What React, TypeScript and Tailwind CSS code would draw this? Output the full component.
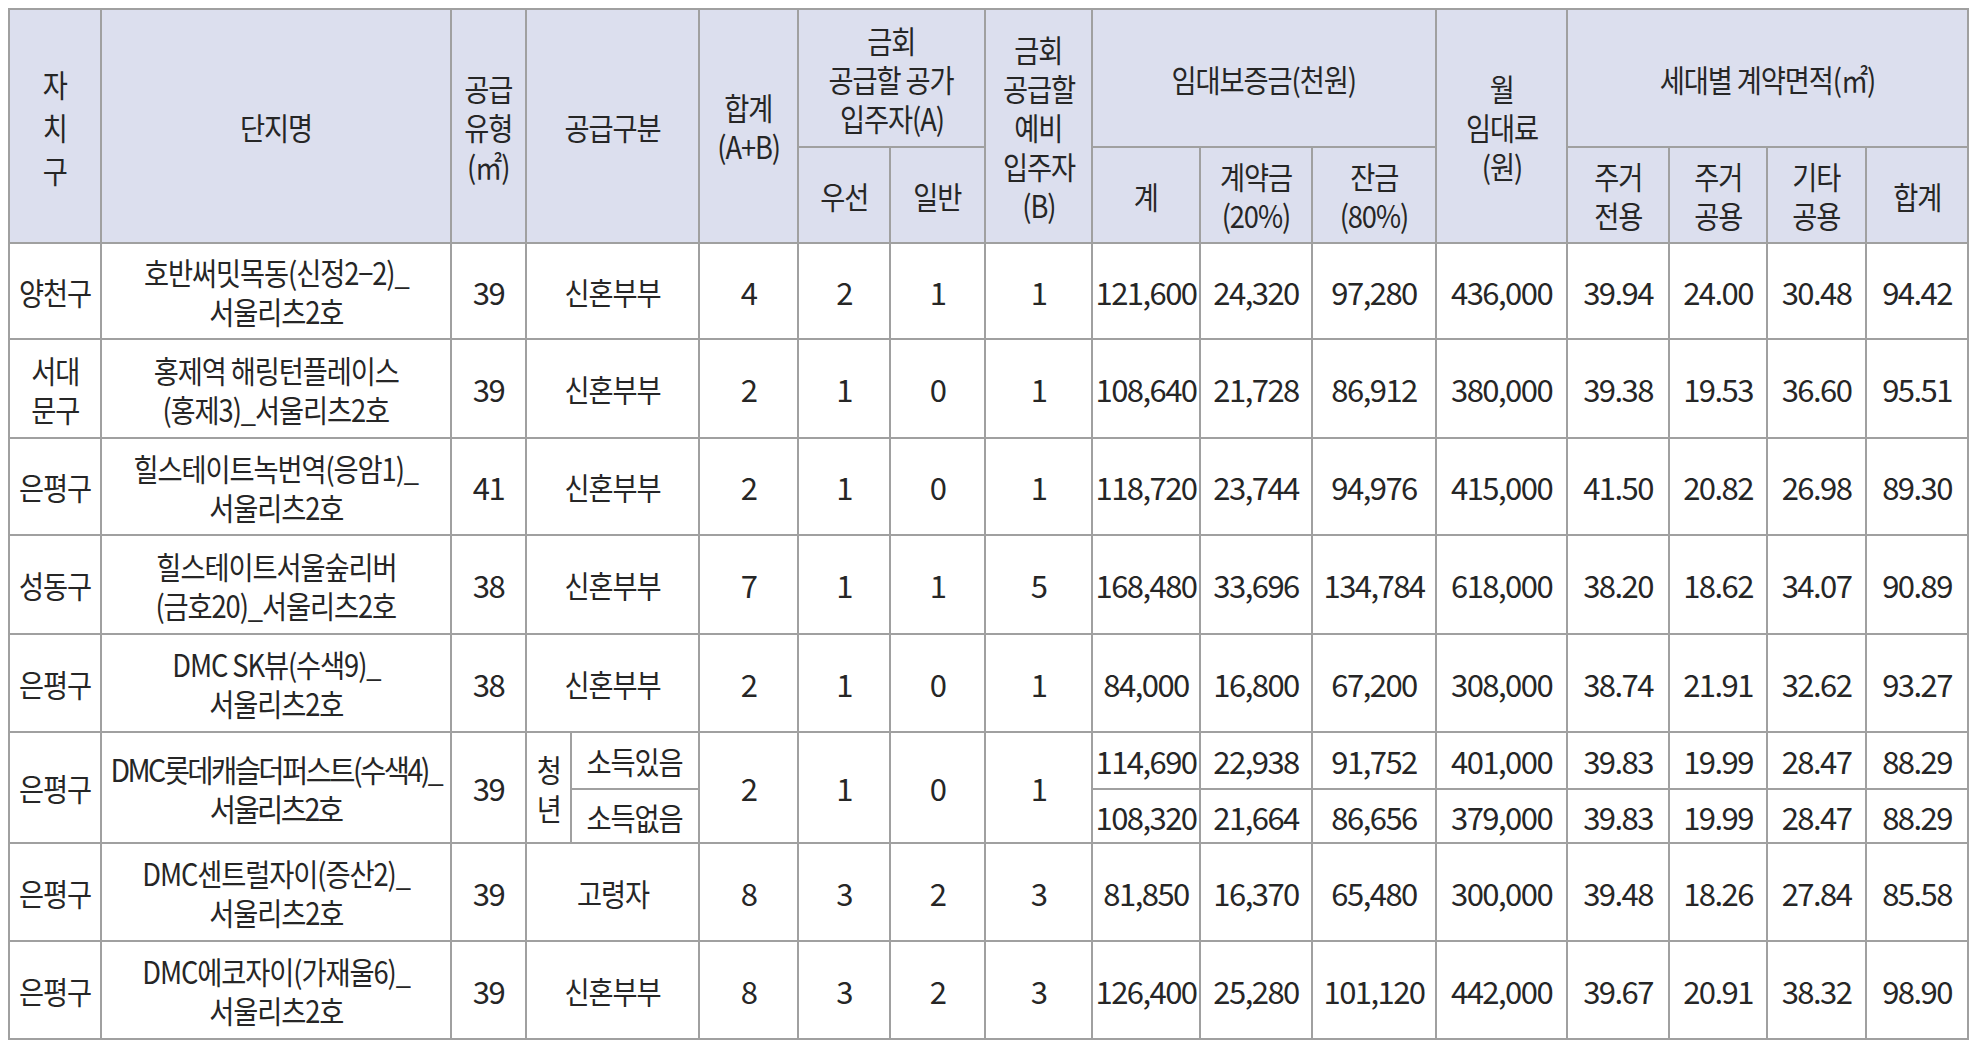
const head = "border-2 border-[#a0a0a0] bg-[#dcdfee] p-0 text-center align-middle font-normal";
const cell = "border-2 border-[#a0a0a0] bg-white p-0 text-center align-middle whitespace-nowrap";

type Row = {
  gu: string[];
  name: string[];
  type: string;
  kind: string;
  total: string;
  first: string;
  normal: string;
  spare: string;
  deposit: string;
  contract: string;
  balance: string;
  rent: string;
  area: string[];
};

const rows: Row[] = [
  { gu: ["양천구"], name: ["호반써밋목동(신정2−2)_", "서울리츠2호"], type: "39", kind: "신혼부부", total: "4", first: "2", normal: "1", spare: "1", deposit: "121,600", contract: "24,320", balance: "97,280", rent: "436,000", area: ["39.94", "24.00", "30.48", "94.42"] },
  { gu: ["서대", "문구"], name: ["홍제역 해링턴플레이스", "(홍제3)_서울리츠2호"], type: "39", kind: "신혼부부", total: "2", first: "1", normal: "0", spare: "1", deposit: "108,640", contract: "21,728", balance: "86,912", rent: "380,000", area: ["39.38", "19.53", "36.60", "95.51"] },
  { gu: ["은평구"], name: ["힐스테이트녹번역(응암1)_", "서울리츠2호"], type: "41", kind: "신혼부부", total: "2", first: "1", normal: "0", spare: "1", deposit: "118,720", contract: "23,744", balance: "94,976", rent: "415,000", area: ["41.50", "20.82", "26.98", "89.30"] },
  { gu: ["성동구"], name: ["힐스테이트서울숲리버", "(금호20)_서울리츠2호"], type: "38", kind: "신혼부부", total: "7", first: "1", normal: "1", spare: "5", deposit: "168,480", contract: "33,696", balance: "134,784", rent: "618,000", area: ["38.20", "18.62", "34.07", "90.89"] },
  { gu: ["은평구"], name: ["DMC SK뷰(수색9)_", "서울리츠2호"], type: "38", kind: "신혼부부", total: "2", first: "1", normal: "0", spare: "1", deposit: "84,000", contract: "16,800", balance: "67,200", rent: "308,000", area: ["38.74", "21.91", "32.62", "93.27"] },
];

const tail: Row[] = [
  { gu: ["은평구"], name: ["DMC센트럴자이(증산2)_", "서울리츠2호"], type: "39", kind: "고령자", total: "8", first: "3", normal: "2", spare: "3", deposit: "81,850", contract: "16,370", balance: "65,480", rent: "300,000", area: ["39.48", "18.26", "27.84", "85.58"] },
  { gu: ["은평구"], name: ["DMC에코자이(가재울6)_", "서울리츠2호"], type: "39", kind: "신혼부부", total: "8", first: "3", normal: "2", spare: "3", deposit: "126,400", contract: "25,280", balance: "101,120", rent: "442,000", area: ["39.67", "20.91", "38.32", "98.90"] },
];

// hangul text: condensed like the print font
function K({ items, tight }: { items: string[]; tight?: boolean }) {
  return (
    <>
      {items.map((t, i) => (
        <div key={i} className="flex justify-center whitespace-nowrap">
          <span
            className={
              tight
                ? "inline-block shrink-0 scale-x-[0.92] tracking-[-0.09em]"
                : "inline-block shrink-0 scale-x-[0.88] tracking-[-0.04em]"
            }
          >
            {t}
          </span>
        </div>
      ))}
    </>
  );
}

// numbers
function N({ v }: { v: string }) {
  return <span className="inline-block tracking-[-0.05em]">{v}</span>;
}

function DataRow({ r, h }: { r: Row; h: string }) {
  return (
    <tr className={h}>
      <td className={cell}><K items={r.gu} /></td>
      <td className={cell}><K items={r.name} /></td>
      <td className={cell}><N v={r.type} /></td>
      <td className={cell} colSpan={2}><K items={[r.kind]} /></td>
      <td className={cell}><N v={r.total} /></td>
      <td className={cell}><N v={r.first} /></td>
      <td className={cell}><N v={r.normal} /></td>
      <td className={cell}><N v={r.spare} /></td>
      <td className={cell}><N v={r.deposit} /></td>
      <td className={cell}><N v={r.contract} /></td>
      <td className={cell}><N v={r.balance} /></td>
      <td className={cell}><N v={r.rent} /></td>
      {r.area.map((a, i) => (
        <td key={i} className={cell}><N v={a} /></td>
      ))}
    </tr>
  );
}

export default function App() {
  return (
    <div className="min-h-screen bg-white pl-[8px] pt-[8px] font-['Noto_Sans_CJK_KR','Noto_Sans',sans-serif] text-[31px] leading-[39px] text-[#262626]">
      <table className="table-fixed border-collapse w-[1960px]">
        <colgroup>
          <col className="w-[92px]" />
          <col className="w-[350px]" />
          <col className="w-[75px]" />
          <col className="w-[45px]" />
          <col className="w-[128px]" />
          <col className="w-[99px]" />
          <col className="w-[92px]" />
          <col className="w-[95px]" />
          <col className="w-[107px]" />
          <col className="w-[108px]" />
          <col className="w-[112px]" />
          <col className="w-[124px]" />
          <col className="w-[131px]" />
          <col className="w-[102px]" />
          <col className="w-[98px]" />
          <col className="w-[99px]" />
          <col className="w-[102px]" />
        </colgroup>
        <thead>
          <tr className="h-[138px]">
            <th rowSpan={2} className={`${head} leading-[43px]`}><K items={["자", "치", "구"]} /></th>
            <th rowSpan={2} className={head}><K items={["단지명"]} /></th>
            <th rowSpan={2} className={head}><K items={["공급", "유형", "(㎡)"]} /></th>
            <th rowSpan={2} colSpan={2} className={head}><K items={["공급구분"]} /></th>
            <th rowSpan={2} className={head}><K items={["합계", "(A+B)"]} /></th>
            <th colSpan={2} className={head}><K items={["금회", "공급할 공가", "입주자(A)"]} /></th>
            <th rowSpan={2} className={head}><K items={["금회", "공급할", "예비", "입주자", "(B)"]} /></th>
            <th colSpan={3} className={head}><K items={["임대보증금(천원)"]} /></th>
            <th rowSpan={2} className={head}><K items={["월", "임대료", "(원)"]} /></th>
            <th colSpan={4} className={head}><K items={["세대별 계약면적(㎡)"]} /></th>
          </tr>
          <tr className="h-[96px]">
            <th className={head}><K items={["우선"]} /></th>
            <th className={head}><K items={["일반"]} /></th>
            <th className={head}><K items={["계"]} /></th>
            <th className={head}><K items={["계약금", "(20%)"]} /></th>
            <th className={head}><K items={["잔금", "(80%)"]} /></th>
            <th className={head}><K items={["주거", "전용"]} /></th>
            <th className={head}><K items={["주거", "공용"]} /></th>
            <th className={head}><K items={["기타", "공용"]} /></th>
            <th className={head}><K items={["합계"]} /></th>
          </tr>
        </thead>
        <tbody>
          <DataRow r={rows[0]} h="h-[96px]" />
          <DataRow r={rows[1]} h="h-[99px]" />
          <DataRow r={rows[2]} h="h-[97px]" />
          <DataRow r={rows[3]} h="h-[99px]" />
          <DataRow r={rows[4]} h="h-[98px]" />
          <tr className="h-[57px]">
            <td rowSpan={2} className={cell}><K items={["은평구"]} /></td>
            <td rowSpan={2} className={`${cell} overflow-hidden`}><K tight items={["DMC롯데캐슬더퍼스트(수색4)_", "서울리츠2호"]} /></td>
            <td rowSpan={2} className={cell}><N v="39" /></td>
            <td rowSpan={2} className={cell}><K items={["청", "년"]} /></td>
            <td className={cell}><K items={["소득있음"]} /></td>
            <td rowSpan={2} className={cell}><N v="2" /></td>
            <td rowSpan={2} className={cell}><N v="1" /></td>
            <td rowSpan={2} className={cell}><N v="0" /></td>
            <td rowSpan={2} className={cell}><N v="1" /></td>
            <td className={cell}><N v="114,690" /></td>
            <td className={cell}><N v="22,938" /></td>
            <td className={cell}><N v="91,752" /></td>
            <td className={cell}><N v="401,000" /></td>
            <td className={cell}><N v="39.83" /></td>
            <td className={cell}><N v="19.99" /></td>
            <td className={cell}><N v="28.47" /></td>
            <td className={cell}><N v="88.29" /></td>
          </tr>
          <tr className="h-[54px]">
            <td className={cell}><K items={["소득없음"]} /></td>
            <td className={cell}><N v="108,320" /></td>
            <td className={cell}><N v="21,664" /></td>
            <td className={cell}><N v="86,656" /></td>
            <td className={cell}><N v="379,000" /></td>
            <td className={cell}><N v="39.83" /></td>
            <td className={cell}><N v="19.99" /></td>
            <td className={cell}><N v="28.47" /></td>
            <td className={cell}><N v="88.29" /></td>
          </tr>
          <DataRow r={tail[0]} h="h-[98px]" />
          <DataRow r={tail[1]} h="h-[98px]" />
        </tbody>
      </table>
    </div>
  );
}
